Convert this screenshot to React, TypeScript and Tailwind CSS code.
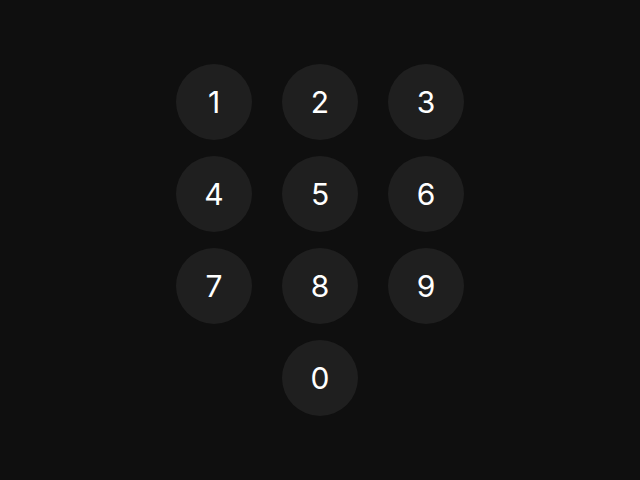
const keys = ['1', '2', '3', '4', '5', '6', '7', '8', '9'];

export default function App() {
  return (
    <div className="flex h-[480px] w-[640px] items-center justify-center bg-[#0f0f0f] font-['Inter',sans-serif]">
      <div className="grid grid-cols-[repeat(3,76px)] gap-x-[30px] gap-y-[16px]">
        {keys.map((k) => (
          <button
            key={k}
            className="flex h-[76px] w-[76px] items-center justify-center rounded-full bg-[#1f1f1f] text-[30px] text-white"
          >
            {k}
          </button>
        ))}
        <button className="col-start-2 flex h-[76px] w-[76px] items-center justify-center rounded-full bg-[#1f1f1f] text-[30px] text-white">
          0
        </button>
      </div>
    </div>
  );
}
